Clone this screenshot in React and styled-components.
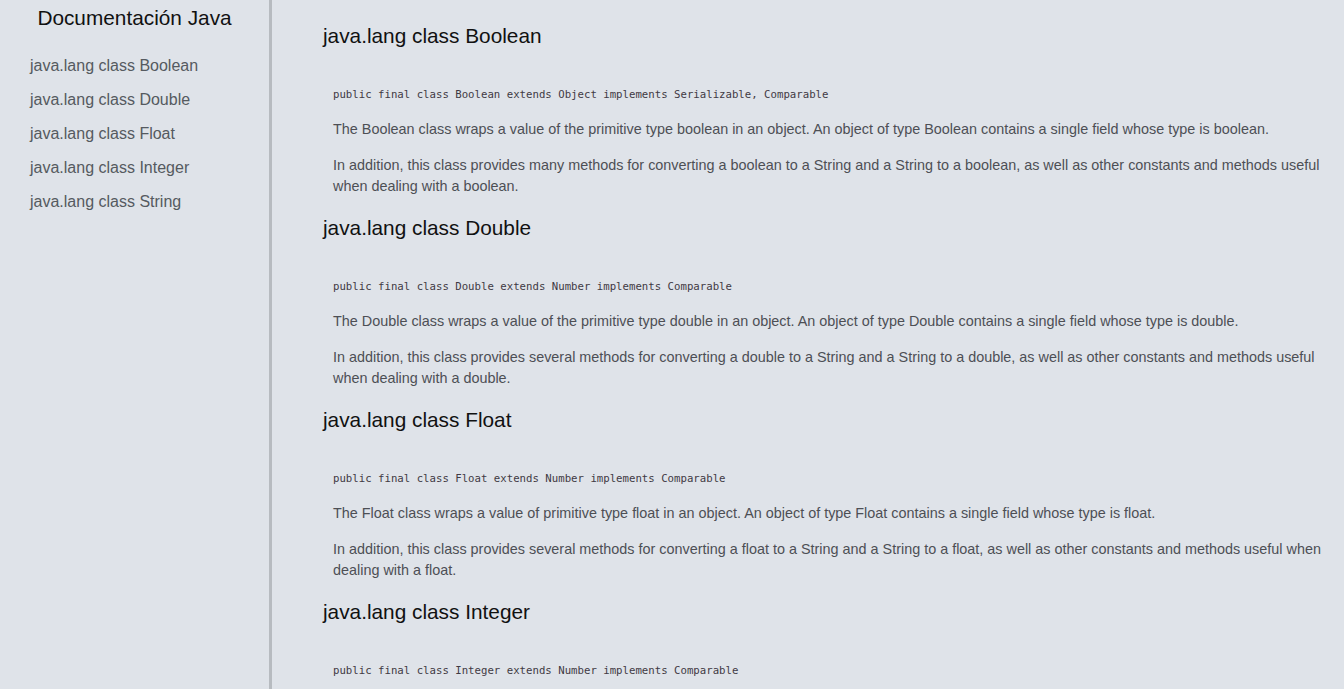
import React from "react";
import styled, { createGlobalStyle } from "styled-components";

const Global = createGlobalStyle`
  html, body { margin: 0; padding: 0; background: #dfe3e9; }
  body { font-family: "Liberation Sans", Arial, sans-serif; }
  * { box-sizing: border-box; }
`;

const Layout = styled.div`
  display: flex;
  min-height: 100vh;
`;

const Sidebar = styled.nav`
  width: 272px;
  flex: 0 0 272px;
  border-right: 3px solid #b7bbc0;
  height: 100vh;
  position: sticky;
  top: 0;
`;

const SideTitle = styled.header`
  font-size: 20.8px;
  line-height: 24px;
  color: #111;
  text-align: center;
  padding-top: 6px;
  margin-bottom: 26px;
`;

const NavList = styled.ul`
  list-style: none;
  margin: 0;
  padding: 0 0 0 30px;
`;

const NavItem = styled.li`
  font-size: 16px;
  line-height: 20px;
  color: #555a60;
  margin-bottom: 14px;
`;

const Main = styled.main`
  flex: 1;
  padding: 24px 14px 0 51px;
`;

const Section = styled.section`
  margin-bottom: 19.5px;
`;

const Heading = styled.h2`
  margin: 0;
  font-size: 20.8px;
  line-height: 24px;
  font-weight: normal;
  color: #111;
`;

const Code = styled.pre`
  margin: 40px 0 16.5px 10px;
  font-family: "DejaVu Sans Mono", "Liberation Mono", monospace;
  font-size: 10.7px;
  line-height: 14px;
  color: #3f3a44;
`;

const Para = styled.p`
  margin: 0 0 15px 10px;
  font-size: 14.4px;
  line-height: 21px;
  color: #4d4f55;
  &:last-child { margin-bottom: 0; }
`;

const classes = [
  {
    name: "Boolean",
    code: "public final class Boolean extends Object implements Serializable, Comparable",
    p1: "The Boolean class wraps a value of the primitive type boolean in an object. An object of type Boolean contains a single field whose type is boolean.",
    p2: "In addition, this class provides many methods for converting a boolean to a String and a String to a boolean, as well as other constants and methods useful when dealing with a boolean.",
  },
  {
    name: "Double",
    code: "public final class Double extends Number implements Comparable",
    p1: "The Double class wraps a value of the primitive type double in an object. An object of type Double contains a single field whose type is double.",
    p2: "In addition, this class provides several methods for converting a double to a String and a String to a double, as well as other constants and methods useful when dealing with a double.",
  },
  {
    name: "Float",
    code: "public final class Float extends Number implements Comparable",
    p1: "The Float class wraps a value of primitive type float in an object. An object of type Float contains a single field whose type is float.",
    p2: "In addition, this class provides several methods for converting a float to a String and a String to a float, as well as other constants and methods useful when dealing with a float.",
  },
  {
    name: "Integer",
    code: "public final class Integer extends Number implements Comparable",
    p1: "The Integer class wraps a value of the primitive type int in an object. An object of type Integer contains a single field whose type is int.",
    p2: "In addition, this class provides several methods for converting an int to a String and a String to an int, as well as other constants and methods useful when dealing with an int.",
  },
  {
    name: "String",
    code: "public final class String extends Object implements Serializable, Comparable, CharSequence",
    p1: "The String class represents character strings. All string literals in Java programs, such as \"abc\", are implemented as instances of this class.",
    p2: "Strings are constant; their values cannot be changed after they are created. String buffers support mutable strings.",
  },
];

export default function App() {
  return (
    <>
      <Global />
      <Layout>
        <Sidebar>
          <SideTitle>Documentación Java</SideTitle>
          <NavList>
            {classes.map((c) => (
              <NavItem key={c.name}>java.lang class {c.name}</NavItem>
            ))}
          </NavList>
        </Sidebar>
        <Main>
          {classes.map((c) => (
            <Section key={c.name}>
              <Heading>java.lang class {c.name}</Heading>
              <Code>{c.code}</Code>
              <Para>{c.p1}</Para>
              <Para>{c.p2}</Para>
            </Section>
          ))}
        </Main>
      </Layout>
    </>
  );
}
